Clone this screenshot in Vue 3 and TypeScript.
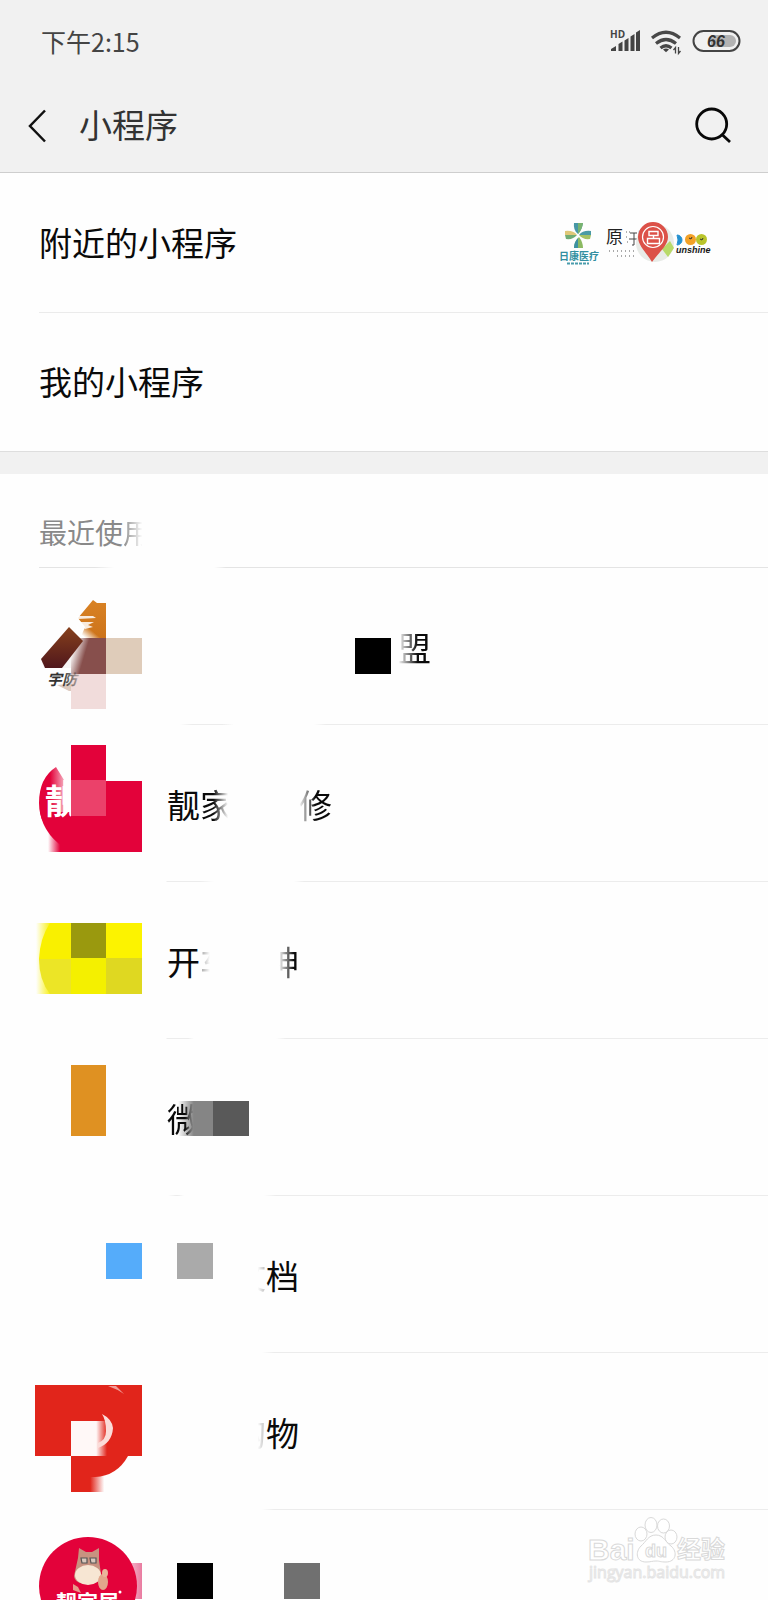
<script setup lang="ts">
interface NamePart {
  text: string
  gap?: string
  fade?: string
}

interface RecentItem {
  id: string
  parts: NamePart[]
  line: number[]
}

/* line: x positions where the rule fades in, is solid, fades out, is gone, returns and is solid again */
const recent: RecentItem[] = [
  { id: 'alliance', parts: [{ text: '盟', gap: 'gap-7', fade: 'fade-in-soft' }], line: [180, 192, 222, 234, 314, 326] },
  {
    id: 'home',
    parts: [
      { text: '靓' },
      { text: '家', fade: 'fade-out' },
      { text: '修', gap: 'gap-2', fade: 'fade-in' }
    ],
    line: [166, 167, 200, 214, 294, 304]
  },
  {
    id: 'drive',
    parts: [
      { text: '开' },
      { text: '车', fade: 'fade-trace' },
      { text: '神', gap: 'gap-1', fade: 'fade-half' }
    ],
    line: [166, 167, 188, 194, 276, 286]
  },
  { id: 'micro', parts: [{ text: '微', fade: 'fade-tail' }], line: [168, 176, 178, 184, 264, 276] },
  {
    id: 'docs',
    parts: [
      { text: '文', gap: 'gap-2', fade: 'fade-edge' },
      { text: '档' }
    ],
    line: [0, 0, 0, 0, 262, 274]
  },
  {
    id: 'shop',
    parts: [
      { text: '购', gap: 'gap-2', fade: 'fade-edge' },
      { text: '物' }
    ],
    line: [0, 0, 0, 0, 262, 274]
  },
  { id: 'family', parts: [], line: [0, 0, 0, 0, 300, 301] }
]

function rule(p: number[]): string {
  const c = '#ececec'
  const t = 'transparent'
  const first = p[3] > 0 ? `${t} ${p[0]}px, ${c} ${p[1]}px, ${c} ${p[2]}px, ${t} ${p[3]}px, ` : ''
  return `linear-gradient(to right, ${first}${t} ${p[4]}px, ${c} ${p[5]}px)`
}
</script>

<template>
  <div class="screen">
    <header class="top">
      <div class="status">
        <span class="clock">下午2:15</span>
        <svg class="status-icons" viewBox="0 0 178 60" aria-hidden="true">
          <text x="20" y="28" class="hd">HD</text>
          <path d="M21 41v-2l5-3v5zM28.500 41v-7l4-2.500v9.500zM34.500 41V30.500l4-2.500v13zM40.500 41V26.500l4-2.500v17zM46 41V22.500l4-2.500v21z" fill="#444" />
          <g fill="none" stroke="#484848" stroke-width="3.200">
            <path d="M62 28Q76 16.500 90 28" />
            <path d="M66 33.500Q76 25.500 86 33.500" />
            <path d="M70.500 38Q76 33.500 81.500 38" />
          </g>
          <path d="M73 39.500q3-2 6 0l-3 2.800z" fill="#444" />
          <path d="M85.500 43.500v-6l-2 2.500M88.500 37v6.500l2-2.500" fill="none" stroke="#444" stroke-width="1.300" />
          <rect x="103.500" y="21" width="46" height="20" rx="10" fill="none" stroke="#444" stroke-width="2" />
          <path d="M121 25h19a6 6 0 0 1 0 12h-19z" fill="#b3b3b3" />
          <text x="117" y="37" class="charge">66</text>
        </svg>
      </div>
      <div class="title-bar">
        <button class="icon-button back" type="button" aria-label="返回">
          <svg viewBox="0 0 24 40" width="24" height="40"><path d="M18 4.500 3 20 18 35.500" fill="none" stroke="#111" stroke-width="2.500" /></svg>
        </button>
        <h1>小程序</h1>
        <button class="icon-button search" type="button" aria-label="搜索">
          <svg viewBox="0 0 44 44" width="44" height="44"><g fill="none" stroke="#080808" stroke-width="2.800"><circle cx="21.700" cy="20" r="15" /><path d="m32 30.500 8 7.500" /></g></svg>
        </button>
      </div>
    </header>

    <nav class="links">
      <a class="link inset" href="#nearby">
        <span>附近的小程序</span>
        <svg class="nearby" viewBox="0 0 190 70" aria-hidden="true">
          <g>
            <path d="M34 16h9q-1 7-5 11-5-4-4-11z" fill="#4797a6" />
            <path d="M38 16h5q-1 7-5 11z" fill="#79b36f" />
            <path d="M34 41h9q0-6-4-11-5 5-5 11z" fill="#8cba63" />
            <path d="M34 41h4V31q-4 4-4 10z" fill="#3d91a3" />
            <path d="M25 24q8-1 12 4H25z" fill="#e0c878" />
            <path d="M25 28h12q-4 5-11 4z" fill="#72ad74" />
            <path d="M51 24q-8-1-12 4h12z" fill="#4a9aa5" />
            <path d="M51 28H39q4 5 11 4z" fill="#a4c164" />
            <text x="19" y="53" class="clinic">日康医疗</text>
            <path d="M27 56.500h22" stroke="#4a9cac" stroke-width="2" stroke-dasharray="3 1" />
          </g>
          <g>
            <text x="66" y="36" class="origin">原</text>
            <path d="M86 25h4M86 30h3M87 35h2" stroke="#666" stroke-dasharray="1 2" />
            <path d="M90 26h7M89 32h8M94 26v12h-2" fill="none" stroke="#444" />
            <path d="M69 44h26M77 49h17" stroke="#555" stroke-width="1.200" stroke-dasharray="1 3" />
          </g>
          <g>
            <circle cx="115" cy="36" r="19" fill="#e8ebe7" />
            <path d="M98 24l11-6 2 9-12 6z" fill="#cfe2f0" />
            <path d="M122 42l8-8 4 7-6 9z" fill="#b8da69" />
            <path d="M112 55C107 46 98 39 98 30a15 15 0 0 1 30 0c0 9-10 16-16 25z" fill="#dc5148" />
            <circle cx="113" cy="30" r="10.500" fill="none" stroke="#fff" stroke-width="1.200" />
            <path d="M109 24.500h9v4h-9zM113.500 28.500v3M107.500 31.500h12v5h-12z" fill="none" stroke="#fff" stroke-width="1.400" />
          </g>
          <g>
            <path d="M137 28a5 5 0 0 1 0 10q2-5 0-10z" fill="#2591d0" stroke="#2591d0" />
            <circle cx="150.500" cy="32.500" r="5.500" fill="#f3a127" />
            <circle cx="161.500" cy="32.500" r="5.500" fill="#b9c42b" />
            <path d="m149 31 2 1 1-2M160 32l2 1 1-2" fill="none" stroke="#333" />
            <text x="136" y="46" class="shine">unshine</text>
          </g>
        </svg>
      </a>
      <a class="link" href="#mine"><span>我的小程序</span></a>
    </nav>

    <main class="recent">
      <h2><span>最近使</span><span class="fade-label">用</span></h2>
      <ul>
        <li v-for="item in recent" :key="item.id">
          <a class="app" :href="'#' + item.id" :style="{ backgroundImage: rule(item.line) }">
            <svg class="art" viewBox="0 1 167 156" aria-hidden="true">
              <g v-if="item.id === 'alliance'">
                <defs>
                  <linearGradient id="brown" x1="0" y1="0" x2="0" y2="1"><stop offset="0" stop-color="#86401c" /><stop offset="1" stop-color="#50171c" /></linearGradient>
                  <linearGradient id="orange" x1="0" y1="0" x2="0" y2="1"><stop offset="0" stop-color="#d98224" /><stop offset="1" stop-color="#cc731a" /></linearGradient>
                  <linearGradient id="plum" x1="0" y1="0" x2="1" y2="0.300"><stop offset="0.120" stop-color="#874f4c" stop-opacity="0" /><stop offset="0.480" stop-color="#874f4c" /></linearGradient>
                  <linearGradient id="haze" x1="0" y1="1" x2="1" y2="0"><stop offset="0.200" stop-color="#fff" /><stop offset="0.500" stop-color="#fff" stop-opacity="0" /></linearGradient>
                  <linearGradient id="dim" x1="0" y1="0" x2="1" y2="0"><stop offset="0.500" stop-color="#333" /><stop offset="1" stop-color="#333" stop-opacity="0.300" /></linearGradient>
                </defs>
                <path d="M93 33l4 3h9v36H80l5-12-7-9z" fill="url(#orange)" />
                <path d="M76 49h17l3 2-18 1zM78 55h16l-6 3 5 2-8 2z" fill="#fff" opacity="0.850" />
                <path d="M76 50h26v22H76z" fill="url(#haze)" />
                <path d="M41 92l3 9h27V71h12z" fill="#eeeaea" opacity="0.500" />
                <rect x="71" y="71" width="36" height="36" fill="url(#plum)" />
                <path d="M69 60l14 14-21 27H45l-4-9z" fill="url(#brown)" />
                <path d="M57 118l20-2v8h-8z" fill="#c5a695" opacity="0.600" />
                <rect x="106" y="71" width="36" height="36" fill="#dfccba" />
                <rect x="71" y="107" width="35" height="35" fill="#f1dcdb" />
                <text x="47" y="118" class="guard">宇防</text>
                <rect x="355" y="71" width="36" height="36" fill="#000" />
              </g>
              <g v-else-if="item.id === 'home'">
                <defs>
                  <linearGradient id="rose" x1="0" y1="0" x2="1" y2="0"><stop offset="0.350" stop-color="#e3023a" /><stop offset="1" stop-color="#e3023a" stop-opacity="0" /></linearGradient>
                  <linearGradient id="foot" x1="0" y1="0" x2="1" y2="0"><stop offset="0" stop-color="#e3023a" stop-opacity="0" /><stop offset="0.500" stop-color="#e3023a" /></linearGradient>
                </defs>
                <path d="M56 43Q39 54 39 79q0 23 20 37h12V92h-7V56z" fill="url(#rose)" />
                <path d="M40 88h31v40Q44 113 40 88z" fill="#e3023a" />
                <rect x="48" y="107" width="24" height="21" fill="url(#foot)" />
                <text x="45" y="90" class="badge">靓</text>
                <rect x="63" y="56" width="8" height="32" fill="#fff" opacity="0.800" />
                <path d="M71 21h35v36h36v71H71z" fill="#e3023a" />
                <rect x="71" y="56" width="35" height="36" fill="#eb416a" />
              </g>
              <g v-else-if="item.id === 'drive'">
                <defs>
                  <linearGradient id="lemon" x1="0" y1="0" x2="1" y2="0"><stop offset="0" stop-color="#f8ef00" stop-opacity="0" /><stop offset="0.450" stop-color="#f8ef00" /></linearGradient>
                </defs>
                <rect x="36" y="42" width="35" height="71" fill="url(#lemon)" />
                <path d="M50 42h21v36H39q1-21 11-36z" fill="#f9f000" />
                <path d="M39 78h32v35H50Q39 99 39 78z" fill="#ece526" />
                <rect x="71" y="42" width="35" height="36" fill="#9a990e" />
                <rect x="106" y="42" width="36" height="36" fill="#fcf300" />
                <rect x="71" y="77" width="35" height="36" fill="#f4f000" />
                <rect x="106" y="77" width="36" height="36" fill="#dfd821" />
              </g>
              <g v-else-if="item.id === 'micro'">
                <defs>
                  <linearGradient id="ash" x1="0" y1="0" x2="1" y2="0"><stop offset="0" stop-color="#858585" stop-opacity="0" /><stop offset="0.450" stop-color="#858585" /></linearGradient>
                </defs>
                <rect x="71" y="27" width="35" height="71" fill="#df9122" />
                <rect x="178" y="63" width="35" height="35" fill="url(#ash)" />
                <rect x="213" y="63" width="36" height="35" fill="#595959" />
              </g>
              <g v-else-if="item.id === 'docs'">
                <rect x="106" y="48" width="36" height="36" fill="#55acfa" />
                <rect x="177" y="48" width="36" height="36" fill="#aaa" />
              </g>
              <g v-else-if="item.id === 'shop'">
                <defs>
                  <linearGradient id="mug" x1="0" y1="0" x2="1" y2="0"><stop offset="0.700" stop-color="#fff8f7" /><stop offset="1" stop-color="#fff8f7" stop-opacity="0" /></linearGradient>
                  <linearGradient id="stem" x1="0" y1="0" x2="1" y2="0"><stop offset="0.550" stop-color="#e1251b" /><stop offset="0.950" stop-color="#e1251b" stop-opacity="0" /></linearGradient>
                </defs>
                <rect x="35" y="33" width="107" height="71" fill="#e1251b" />
                <path d="M108 34h8l8 8q-7-5-16-8z" fill="#fff" opacity="0.550" />
                <rect x="71" y="69" width="36" height="36" fill="url(#mug)" />
                <path d="M102 62q10 5 11 14-1 15-15 20v-5q8-3 8-12 0-11-4-17z" fill="#fbdcd9" />
                <rect x="71" y="104" width="35" height="36" fill="url(#stem)" />
                <path d="M71 104h57q-11 20-33 21H71z" fill="#e1251b" />
              </g>
              <g v-else>
                <defs>
                  <linearGradient id="pink" x1="0" y1="0" x2="1" y2="0"><stop offset="0" stop-color="#f8cbd9" /><stop offset="1" stop-color="#e97ba0" /></linearGradient>
                </defs>
                <rect x="126" y="54" width="16" height="36" fill="url(#pink)" />
                <circle cx="88" cy="77" r="49" fill="#e3023a" />
                <path d="M78 49l1-10 7 4h6l7-4v12l2 14q0 10-13 10T74 67z" fill="#c89280" />
                <ellipse cx="88" cy="66" rx="13" ry="10" fill="#f7e6d3" />
                <ellipse cx="103" cy="73" rx="5" ry="8" fill="#e2a68c" />
                <ellipse cx="105" cy="64" rx="3" ry="4" fill="#eab59c" />
                <path d="M73 75l5 3 3 6-8-3z" fill="#e79b8a" />
                <path d="M81 49h6v5h-5zM90 49h6v5h-5z" fill="#d9c8bd" stroke="#555" stroke-width="1.200" />
                <text x="56" y="101" class="family">靓家居</text>
                <circle cx="120" cy="83" r="1.500" fill="#fff" />
                <rect x="177" y="54" width="36" height="36" fill="#000" />
                <rect x="284" y="54" width="36" height="36" fill="#707070" />
              </g>
            </svg>
            <span class="name"><span v-for="part in item.parts" :key="part.text" :class="[part.gap, part.fade]">{{ part.text }}</span></span>
          </a>
        </li>
      </ul>
    </main>

    <svg class="watermark" viewBox="0 0 190 100" role="img" aria-label="Baidu 经验">
      <g fill="#fff" stroke="#d9d9d9" stroke-width="1">
        <text x="18" y="60" class="wm-latin">Bai</text>
        <ellipse cx="71" cy="34" rx="6" ry="7" />
        <ellipse cx="81" cy="25" rx="6" ry="7.500" />
        <ellipse cx="93.500" cy="26" rx="6" ry="7" />
        <ellipse cx="101" cy="37" rx="6" ry="7" />
        <path d="M86 35c8 0 10 8 15 11 7 6 5 16-5 16-6 0-6-1-10-1s-5 1-10 1c-10 0-11-10-5-16 5-4 7-11 15-11z" />
        <text x="75" y="57" class="wm-du">du</text>
        <text x="107" y="58" class="wm-cjk">经验</text>
      </g>
      <text x="19" y="78" class="wm-url">jingyan.baidu.com</text>
    </svg>
  </div>
</template>

<style>
body {
  margin: 0;
  background: #fefefe;
}
</style>

<style scoped>
.screen {
  position: relative;
  height: 100vh;
  overflow: hidden;
  background: #fefefe;
  color: #0a0a0a;
  font-family: "Noto Sans CJK SC", sans-serif;
}
.top {
  padding-bottom: 4px;
  background: #f1f1f1;
  border-bottom: 1px solid #cecece;
}
.status {
  display: flex;
  align-items: flex-start;
  justify-content: space-between;
  height: 84px;
}
.clock {
  padding: 23px 0 0 41px;
  font-size: 25px;
  line-height: 36px;
  color: #444;
}
.status-icons {
  width: 178px;
  height: 60px;
  margin-top: 10px;
}
.hd {
  font: bold 10px "Open Sans", sans-serif;
  fill: #444;
}
.charge {
  font: italic bold 16px "Liberation Sans", sans-serif;
  fill: #333;
}
.title-bar {
  display: flex;
  align-items: center;
  height: 84px;
}
h1 {
  flex: 1;
  margin: 0;
  padding-bottom: 4px;
  font-size: 33px;
  font-weight: 400;
  line-height: 48px;
  color: #333;
}
.icon-button {
  display: flex;
  padding: 0;
  border: 0;
  background: none;
}
.back {
  margin: 0 25px 0 27px;
  padding-right: 3px;
}
.search {
  margin-right: 34px;
}
.link {
  box-sizing: border-box;
  display: flex;
  align-items: center;
  justify-content: space-between;
  height: 138px;
  padding: 0 0 3px 39px;
  color: inherit;
  font-size: 33px;
  line-height: 48px;
  text-decoration: none;
}
.inset {
  height: 140px;
  background: linear-gradient(#ebebeb, #ebebeb) 39px 100% / 100% 1px no-repeat;
}
.nearby {
  width: 190px;
  height: 70px;
  margin-right: 38px;
}
.clinic {
  font: bold 10px "Noto Sans CJK SC", sans-serif;
  fill: #328fa1;
}
.origin {
  font: 17px "Noto Sans CJK SC", sans-serif;
  fill: #222;
}
.shine {
  font: italic bold 9px "Liberation Sans", sans-serif;
  fill: #181818;
}
.recent {
  border-top: 1px solid #dedede;
}
.recent::before {
  content: "";
  display: block;
  height: 22px;
  background: #f1f1f1;
}
h2 {
  box-sizing: border-box;
  height: 94px;
  margin: 0;
  padding: 38px 0 0 39px;
  background: linear-gradient(to right, transparent 39px, #e4e4e4 39px, #e4e4e4 95px, transparent 114px, transparent 214px, #e4e4e4 226px) 0 100% / 100% 1px no-repeat;
  font-size: 28px;
  font-weight: 400;
  line-height: 40px;
  color: #898989;
}
ul {
  margin: 0;
  padding: 0;
  list-style: none;
}
.app {
  display: flex;
  align-items: center;
  height: 157px;
  background-position: 0 100%;
  background-size: 100% 1px;
  background-repeat: no-repeat;
  color: inherit;
  text-decoration: none;
}
.art {
  flex: none;
  align-self: flex-start;
  width: 167px;
  height: 156px;
  overflow: visible;
}
.name {
  display: flex;
  font-size: 33px;
  line-height: 48px;
}
.gap-1 {
  margin-left: 1em;
}
.gap-2 {
  margin-left: 2em;
}
.gap-7 {
  margin-left: 7em;
}
.fade-in {
  mask-image: linear-gradient(to right, transparent, #000 50%);
}
.fade-in-soft {
  mask-image: linear-gradient(to right, transparent, #000 60%);
}
.fade-out {
  mask-image: linear-gradient(to right, #000 40%, transparent 85%);
}
.fade-half {
  mask-image: linear-gradient(to right, transparent 38%, #000 85%);
}
.fade-trace {
  mask-image: linear-gradient(to right, rgba(0, 0, 0, 0.4), transparent 30%);
}
.fade-tail {
  mask-image: linear-gradient(to right, #000 55%, transparent 80%);
}
.fade-edge {
  mask-image: linear-gradient(to right, transparent 75%, rgba(0, 0, 0, 0.3));
}
.fade-label {
  display: inline-block;
  mask-image: linear-gradient(to right, #000, transparent 70%);
}
.guard {
  font: italic bold 15px "Noto Sans CJK SC", sans-serif;
  fill: url(#dim);
}
.badge {
  font: bold 34px "Noto Sans CJK SC", sans-serif;
  fill: #fff;
}
.family {
  font: bold 21px "Noto Sans CJK SC", sans-serif;
  fill: #fff;
}
.watermark {
  position: absolute;
  right: 8px;
  bottom: 0;
  width: 190px;
  height: 100px;
}
.wm-latin {
  font: bold 30px "Liberation Sans", sans-serif;
}
.wm-du {
  font: bold 18px "Liberation Sans", sans-serif;
}
.wm-cjk {
  font: bold 24px "Noto Sans CJK SC", sans-serif;
}
.wm-url {
  font: 16px "Open Sans", sans-serif;
  fill: #fff;
  stroke: #e4e4e4;
  stroke-width: 1px;
}
</style>
